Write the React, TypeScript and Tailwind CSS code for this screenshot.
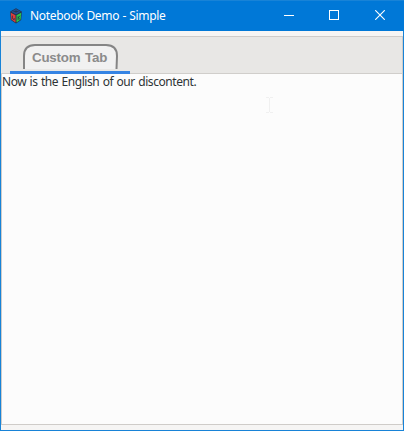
function AppIcon() {
  return (
    <svg width="14" height="16" viewBox="0 0 14 16" className="shrink-0">
      <path d="M7 .3 12.8 3.6 12.2 11.9 7 15.6 1.8 11.9 1.2 3.6Z" fill="#24334c" />
      <path d="M7 1 11.8 3.7 7 6.4 2.2 3.7Z" fill="#234f91" />
      <path d="M1.8 4.7 6.5 7.3V14.5L2.4 11.5Z" fill="#e23d38" />
      <path d="M7.5 7.3 12.2 4.7 11.6 11.5 7.5 14.5Z" fill="#2bc94a" />
      <path
        d="M4.6 3.5H9.4M7 2.2V5M3.4 7.6V10.6L5.2 11.8V10M9.1 8.3V12M9.2 10 11 7.6M9.4 10 11 11.2"
        fill="none"
        stroke="#24334c"
        strokeWidth=".8"
      />
    </svg>
  );
}

function TitleBar() {
  return (
    <header className="flex h-[31px] shrink-0 items-center border-t border-[#1883d7] bg-[#0078d7] text-white">
      <div className="flex flex-1 items-center gap-[6px] pl-[9px]">
        <AppIcon />
        <h1 className="whitespace-nowrap pl-px text-[12px] leading-[16px] tracking-[-0.33px] [word-spacing:0.5px]">
          Notebook Demo - Simple
        </h1>
      </div>
      <button aria-label="Minimize" className="flex h-full w-[46px] items-center justify-center pb-[2px]">
        <svg width="10" height="10" shapeRendering="crispEdges">
          <path d="M0 5.5H10" stroke="white" />
        </svg>
      </button>
      <button aria-label="Maximize" className="flex h-full w-[44px] items-center justify-center pb-[2px]">
        <svg width="10" height="10" shapeRendering="crispEdges">
          <path d="M.5 .5H9.5V9.5H.5Z" fill="none" stroke="white" />
        </svg>
      </button>
      <button aria-label="Close" className="flex h-full w-[48px] items-center justify-center pb-[2px]">
        <svg width="10" height="10">
          <path d="M.2 .2 9.8 9.8M9.8 .2 .2 9.8" stroke="white" strokeWidth="1.1" />
        </svg>
      </button>
    </header>
  );
}

function CustomTab() {
  return (
    <div className="ml-[9px] flex h-[37px] w-[120px] flex-col border-b-[3px] border-[#3584e4] pl-[13px] pt-[7px]">
      <div className="relative h-[26px] w-[95px]">
        <svg width="96" height="26" className="absolute left-0 top-0">
          <path
            d="M1 25V12Q1 1 12 1H83Q94 1 94 12L93.5 25"
            fill="#f1f1f1"
            stroke="#858585"
            strokeWidth="2"
          />
        </svg>
        <span className="relative block whitespace-nowrap pl-[9px] pt-[5px] font-['Liberation_Sans',Arial,sans-serif] text-[13.33px] font-bold leading-[17px] tracking-[-0.2px] text-[#8b8b8b] [word-spacing:1.2px]">
          Custom Tab
        </span>
      </div>
    </div>
  );
}

export default function App() {
  return (
    <div className="flex h-[431px] w-[404px] flex-col overflow-hidden bg-[#1883d7] font-['Noto_Sans','Open_Sans',sans-serif]">
      <TitleBar />
      <div className="mx-px mb-px flex flex-1 flex-col bg-[#f6f5f4] pb-[5px] pt-[5px]">
        <div className="flex flex-1 flex-col border border-[#cfccc9]">
          <div className="-ml-px h-[37px] shrink-0 border-b border-[#d0cecb] bg-[#e8e7e5]">
            <CustomTab />
          </div>
          <main className="relative flex-1 bg-[#fcfcfc]">
            <p className="whitespace-nowrap text-[12px] leading-[16px] tracking-[-0.42px] text-[#2e3436] [word-spacing:0.6px]">
              Now is the English of our discontent.
            </p>
            <svg
              width="9"
              height="17"
              className="absolute left-[263px] top-[23px]"
              shapeRendering="crispEdges"
            >
              <path d="M1 .5H4M5 .5H8M4.5 1V15M1 15.5H4M5 15.5H8" stroke="#f0f0f0" />
            </svg>
          </main>
        </div>
      </div>
    </div>
  );
}
